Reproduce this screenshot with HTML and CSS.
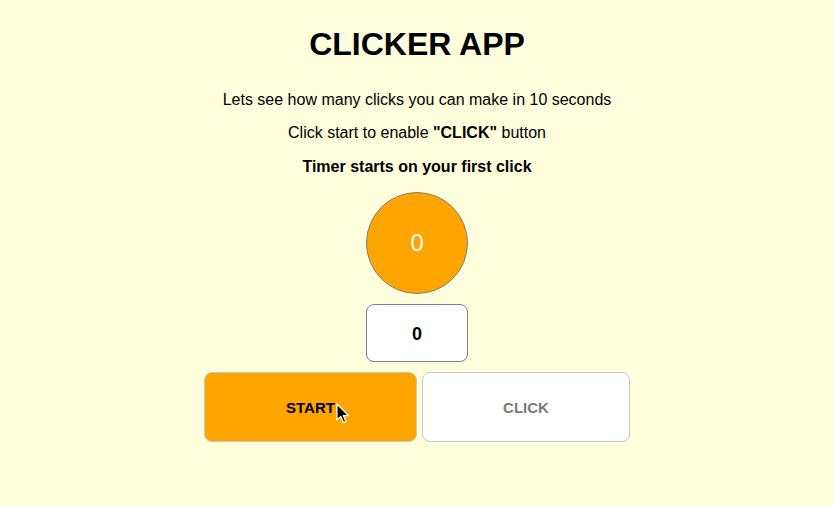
FILE: index.html
```html
<!DOCTYPE html>
<html>
<head>
<meta charset="utf-8">
<link rel="stylesheet" href="styles.css">
</head>
<body>
<main class="app">
  <h1 class="title">CLICKER APP</h1>
  <p class="line first">Lets see how many clicks you can make in 10 seconds</p>
  <p class="line">Click start to enable <b>"CLICK"</b> button</p>
  <p class="line bold">Timer starts on your first click</p>
  <div class="circle">0</div>
  <div class="count">0</div>
  <div class="buttons">
    <button class="btn start">START
      <svg class="cursor" width="14" height="22" viewBox="0 0 14 22"><path d="M1 1 L1 17 L4.8 13.4 L7.4 19.6 L9.8 18.6 L7.3 12.6 L12.4 12.6 Z" fill="#000" stroke="#fff" stroke-width="1.2" stroke-linejoin="round"/></svg>
    </button>
    <button class="btn click" disabled>CLICK</button>
  </div>
</main>
</body>
</html>
```
FILE: styles.css
```css
html, body {
  margin: 0;
  padding: 0;
  background: #ffffde;
}
body {
  font-family: "Liberation Sans", Arial, Helvetica, sans-serif;
  color: #000;
}
.app {
  display: flex;
  flex-direction: column;
  align-items: center;
  padding-top: 26px;
}
.title {
  margin: 0 0 28px 0;
  font-size: 32px;
  line-height: 37px;
  font-weight: bold;
}
.line {
  margin: 0 0 16px 0;
  font-size: 16px;
  line-height: 18px;
}
.line.first {
  margin-bottom: 15px;
}
.bold {
  font-weight: bold;
}
.circle {
  width: 100px;
  height: 96px;
  padding-bottom: 4px;
  border: 1px solid #808080;
  border-radius: 50%;
  background: #ffa500;
  color: #fff;
  font-family: "Open Sans", "Liberation Sans", sans-serif;
  font-size: 24px;
  display: flex;
  align-items: center;
  justify-content: center;
}
.count {
  margin-top: 10px;
  width: 100px;
  height: 54px;
  padding-top: 2px;
  border: 1px solid #808080;
  border-radius: 8px;
  background: #fff;
  font-size: 18px;
  font-weight: bold;
  display: flex;
  align-items: center;
  justify-content: center;
  box-sizing: content-box;
}
.buttons {
  margin-top: 10px;
  display: flex;
  gap: 5px;
}
.btn {
  position: relative;
  height: 70px;
  border: 1px solid #c8c8c8;
  border-radius: 8px;
  font-family: "Liberation Sans", Arial, sans-serif;
  font-size: 15px;
  font-weight: bold;
  padding: 0;
  box-sizing: border-box;
}
.start {
  width: 213px;
  background: #ffa500;
  color: #000;
}
.click {
  width: 208px;
  background: #fff;
  color: #7a7a7a;
}
.cursor {
  position: absolute;
  left: 131px;
  top: 30px;
}
```
